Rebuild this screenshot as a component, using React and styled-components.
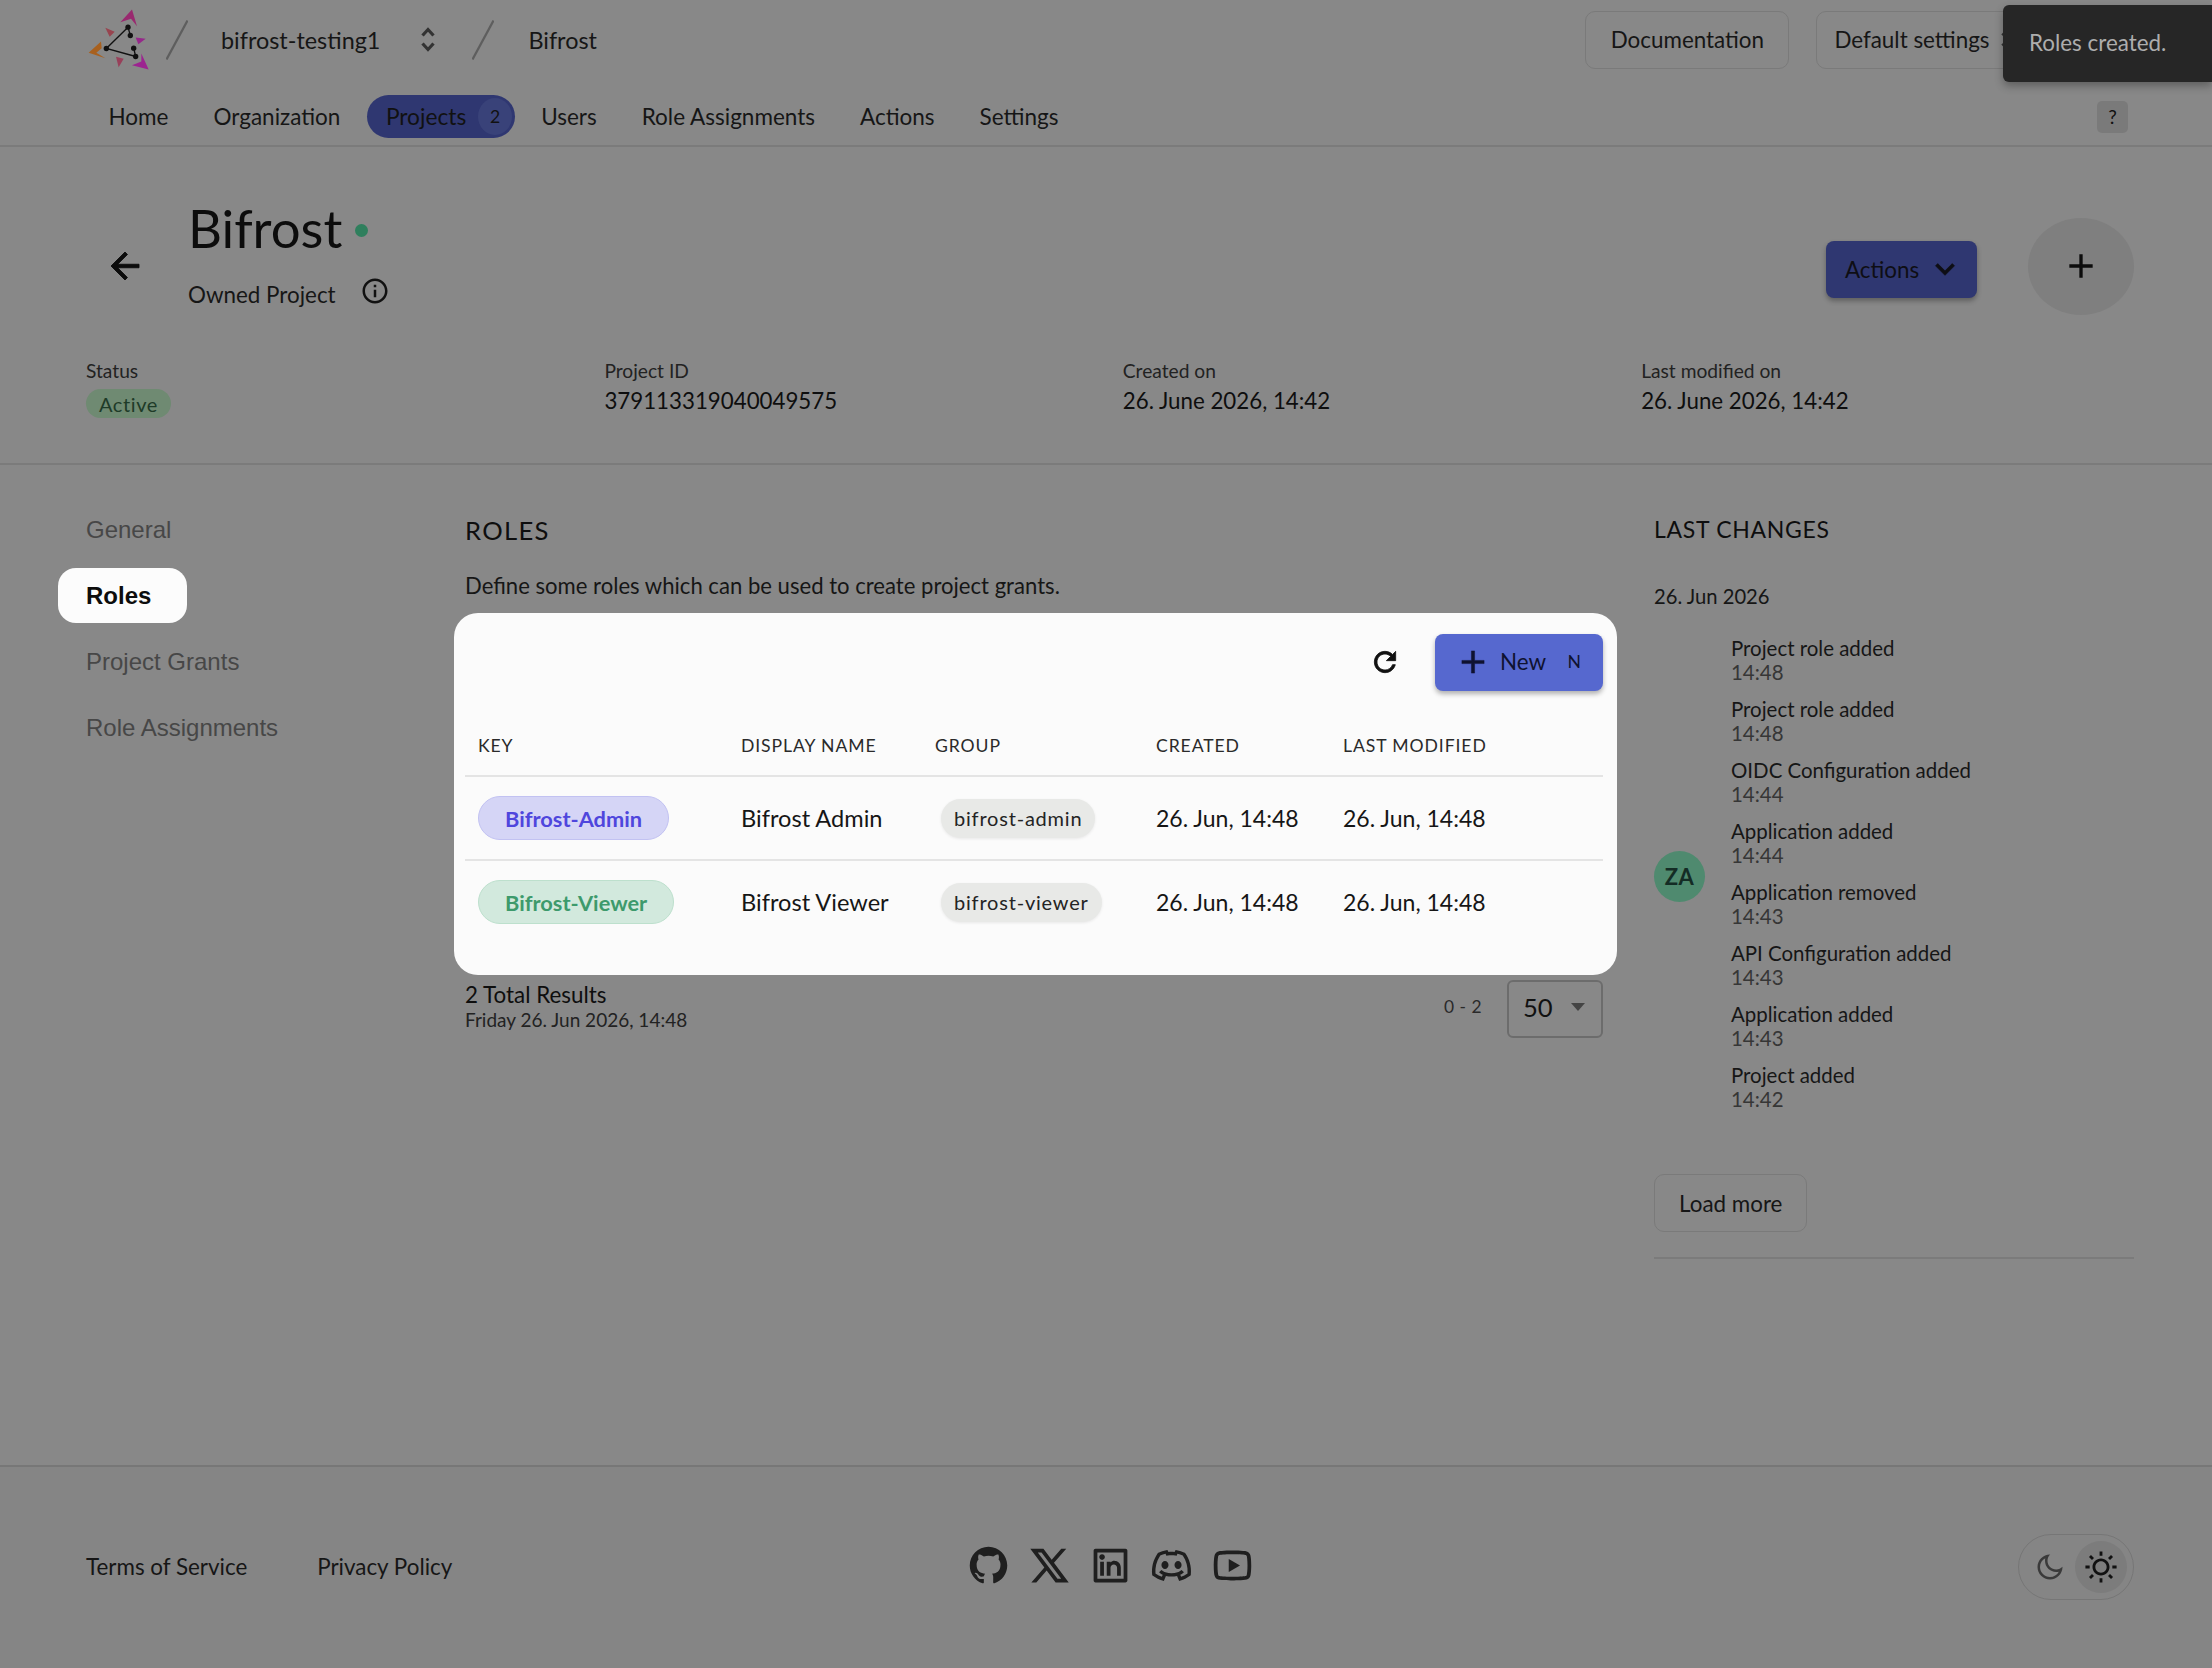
import React from "react";
import styled, { createGlobalStyle } from "styled-components";
import {
  RiGithubFill,
  RiTwitterXLine,
  RiLinkedinBoxLine,
  RiDiscordLine,
  RiYoutubeLine,
  RiMoonLine,
  RiSunLine,
} from "react-icons/ri";

const GlobalStyle = createGlobalStyle`
  * { box-sizing: border-box; }
  body {
    margin: 0;
    background: #888888;
    color: #111111;
    font-family: Lato, "Open Sans", sans-serif;
  }
`;

const Page = styled.div`
  position: relative;
  width: 2212px;
  height: 1668px;
  display: flex;
  flex-direction: column;
  overflow: hidden;
`;

const Header = styled.header`
  height: 147px;
  border-bottom: 2px solid #7b7b7b;
`;

const TopRow = styled.div`
  height: 79px;
  display: flex;
  align-items: center;
  padding: 0 177px 0 87px;
`;

const Crumb = styled.span`
  font-size: 23.4px;
  color: #161616;
  margin-left: ${({ $ml }) => $ml || 0}px;
`;

const Slash = styled.svg`
  width: 22px;
  height: 40px;
  margin-left: ${({ $ml }) => $ml}px;
  flex: none;
`;

const UpDown = styled.svg`
  width: 20px;
  height: 25px;
  margin-left: ${({ $ml }) => $ml || 0}px;
  flex: none;
`;

const TopActions = styled.div`
  margin-left: auto;
  display: flex;
  gap: 27px;
`;

const OutlineButton = styled.div`
  height: 58px;
  display: inline-flex;
  align-items: center;
  justify-content: center;
  border: 1.5px solid #7a7a7a;
  border-radius: 10px;
  font-size: 22.4px;
  color: #161616;
  padding: 0 ${({ $pr }) => $pr ?? 0}px 0 ${({ $pl }) => $pl ?? 0}px;
`;

const DocButton = styled(OutlineButton)`
  width: 204px;
`;

const NavRow = styled.nav`
  height: 43px;
  margin-top: 16px;
  display: flex;
  align-items: center;
  padding: 0 84px 0 86px;
`;

const NavItem = styled.a`
  font-size: 22.5px;
  color: #161616;
  padding: 0 22.5px;
`;

const ActiveItem = styled.a`
  height: 43px;
  display: flex;
  align-items: center;
  font-size: 22.7px;
  color: #111111;
  background: #2f3771;
  border-radius: 22px;
  margin: 0 3.5px 0 4px;
  padding: 0 3px 0 19px;
`;

const Count = styled.span`
  width: 34px;
  height: 37px;
  margin-left: 12px;
  display: flex;
  align-items: center;
  justify-content: center;
  border-radius: 50%;
  background: #394279;
  font-size: 17.6px;
`;

const Help = styled.span`
  margin-left: auto;
  width: 31px;
  height: 32px;
  display: flex;
  align-items: center;
  justify-content: center;
  border-radius: 5px;
  background: #7a7a7a;
  font-size: 19.2px;
`;

const ProjectHead = styled.section`
  height: 318px;
  border-bottom: 2px solid #7b7b7b;
  padding: 70px 78px 0 86px;
`;

const TitleRow = styled.div`
  height: 98px;
  display: flex;
  align-items: center;
`;

const BackArrow = styled.svg`
  width: 42px;
  height: 42px;
  margin-left: 18px;
  flex: none;
`;

const TitleBlock = styled.div`
  align-self: flex-start;
  margin: -20px 0 0 42px;
`;

const TitleLine = styled.div`
  display: flex;
  align-items: flex-start;
`;

const Title = styled.h1`
  margin: 0;
  font-size: 52.7px;
  font-weight: 400;
  line-height: 62px;
  color: #0c0c0c;
`;

const StatusDot = styled.span`
  width: 13px;
  height: 13px;
  margin: 27px 0 0 13px;
  border-radius: 50%;
  background: #2f7f5d;
`;

const SubLine = styled.div`
  display: flex;
  align-items: center;
  margin-top: 22px;
  font-size: 22.4px;
  color: #161616;
`;

const InfoIcon = styled.svg`
  width: 30px;
  height: 30px;
  margin: -7px 0 0 24px;
`;

const ActionsButton = styled.div`
  margin-left: auto;
  margin-top: 6px;
  width: 151px;
  height: 57px;
  display: flex;
  align-items: center;
  padding-left: 19px;
  border-radius: 8px;
  background: #2f3771;
  font-size: 22.4px;
  color: #0e0e14;
  box-shadow: 0 3px 5px rgba(0, 0, 0, 0.3);
`;

const Chevron = styled.svg`
  width: 38px;
  height: 38px;
  margin-left: 7px;
`;

const RoundAdd = styled.div`
  width: 106px;
  height: 97px;
  margin-left: 51px;
  display: flex;
  align-items: center;
  justify-content: center;
  border-radius: 50%;
  background: #7f7f7f;
`;

const AddIcon = styled.svg`
  width: 40px;
  height: 40px;
`;

const InfoGrid = styled.div`
  display: grid;
  grid-template-columns: repeat(4, 518.4px);
  margin-top: 42px;
`;

const InfoLabel = styled.div`
  font-size: 19.2px;
  line-height: 28px;
  color: #222222;
`;

const InfoValue = styled.div`
  font-size: 22.3px;
  line-height: 30px;
  margin-top: 1px;
  color: #0e0e0e;
`;

const StatusChip = styled.span`
  display: inline-flex;
  align-items: center;
  height: 29px;
  margin-top: 4px;
  padding: 0 13px;
  border-radius: 15px;
  background: #6f8a72;
  color: #1e3b28;
  font-size: 20px;
  letter-spacing: 0.6px;
`;

const Body = styled.main`
  flex: 1;
  display: grid;
  grid-template-columns: 379px 1138px 480px;
  align-items: start;
  padding-left: 86px;
`;

const SideMenu = styled.div`
  display: flex;
  flex-direction: column;
  align-items: flex-start;
  gap: 12px;
  padding-top: 38px;
`;

const SideItem = styled.a`
  height: 54px;
  display: flex;
  align-items: center;
  font-family: "Liberation Sans", Arial, sans-serif;
  font-size: 24px;
  color: #474747;
`;

const ActiveSideItem = styled(SideItem)`
  height: 55px;
  margin: -1px 0 0 -28px;
  padding: 0 36px 0 28px;
  color: #0d0d0d;
  font-weight: 700;
  background: #fcfcfc;
  border-radius: 18px;
`;

const Content = styled.section`
  padding-top: 49px;
`;

const Heading = styled.h2`
  margin: 0;
  font-size: 25.6px;
  font-weight: 400;
  line-height: 32px;
  letter-spacing: 1.3px;
  color: #0e0e0e;
`;

const SideHeading = styled(Heading)`
  font-size: 23px;
  letter-spacing: 0.7px;
`;

const Description = styled.p`
  margin: 24px 0 11px;
  font-size: 22.1px;
  line-height: 32px;
  color: #161616;
`;

const TableCard = styled.div`
  margin: 0 -14px 0 -11px;
  height: 362px;
  padding: 21px 14px 0 11px;
  background: #fbfbfb;
  border-radius: 24px;
`;

const Toolbar = styled.div`
  height: 57px;
  display: flex;
  align-items: center;
  justify-content: flex-end;
`;

const RefreshIcon = styled.svg`
  width: 32px;
  height: 32px;
  margin: -2px 34px 0 0;
`;

const NewButton = styled.div`
  width: 168px;
  height: 57px;
  display: flex;
  align-items: center;
  padding: 0 0 2px 19px;
  border-radius: 8px;
  background: #5668cf;
  font-size: 22.4px;
  color: #0f1230;
  box-shadow: 0 3px 5px rgba(0, 0, 0, 0.3);
`;

const PlusIcon = styled.svg`
  width: 38px;
  height: 38px;
  margin-right: 8px;
`;

const Key = styled.span`
  margin-left: auto;
  margin-right: 22px;
  font-size: 17.6px;
`;

const TableRow = styled.div`
  display: grid;
  grid-template-columns: 263px 194px 221px 187px 1fr;
  align-items: center;
  height: ${({ $h }) => $h}px;
  padding-left: 13px;
  border-bottom: ${({ $line }) => ($line ? "2px solid #e4e4e4" : "none")};
`;

const HeadRow = styled(TableRow)`
  margin-top: 24px;
`;

const HeadCell = styled.span`
  font-size: 17.6px;
  letter-spacing: 0.9px;
  color: #2a2a2a;
`;

const NameCell = styled.span`
  font-size: 23.6px;
  color: #161616;
`;

const DateCell = styled.span`
  font-size: 23px;
  color: #161616;
`;

const KeyChip = styled.span`
  justify-self: start;
  height: 44px;
  display: inline-flex;
  align-items: center;
  padding: 0 26px;
  border-radius: 22px;
  border: 1.5px solid ${({ $tone }) => ($tone === "green" ? "#bde0cd" : "#c2c2f2")};
  background: ${({ $tone }) => ($tone === "green" ? "#d2e9dd" : "#d5d5f6")};
  color: ${({ $tone }) => ($tone === "green" ? "#3d9a6c" : "#4f46dd")};
  font-size: 21.8px;
  font-weight: 700;
`;

const GroupChip = styled.span`
  justify-self: start;
  height: 39px;
  margin-left: 6px;
  display: inline-flex;
  align-items: center;
  padding: 0 13px;
  border-radius: 20px;
  background: #e8e9e7;
  font-size: 20px;
  letter-spacing: 0.8px;
  color: #242424;
  box-shadow: 0 1px 3px rgba(0, 0, 0, 0.08);
`;

const Pager = styled.div`
  display: flex;
  align-items: center;
  margin-top: 5px;
  height: 58px;
`;

const Totals = styled.div`
  margin-top: -5px;
`;

const TotalCount = styled.div`
  font-size: 22.4px;
  line-height: 26px;
  color: #0e0e0e;
`;

const TotalDate = styled.div`
  font-size: 19px;
  line-height: 24px;
  color: #222222;
`;

const PageRange = styled.span`
  margin: -6px 0 0 auto;
  font-size: 17.4px;
  letter-spacing: 0.5px;
  color: #2a2a2a;
`;

const PageSelect = styled.div`
  width: 96px;
  height: 58px;
  margin-left: 25px;
  display: flex;
  align-items: center;
  padding: 0 0 4px 14px;
  border: 2px solid #6c6c6c;
  border-radius: 6px;
  font-size: 25.6px;
  color: #111111;
`;

const Caret = styled.span`
  margin-left: 18px;
  border-left: 7px solid transparent;
  border-right: 7px solid transparent;
  border-top: 8px solid #444444;
`;

const Changes = styled.aside`
  margin-left: 51px;
  padding-top: 48px;
  width: 480px;
  border-bottom: 2px solid #7b7b7b;
  padding-bottom: 25px;
`;

const DateLine = styled.div`
  margin-top: 36px;
  font-size: 20.2px;
  line-height: 30px;
  color: #161616;
`;

const ChangeGroup = styled.div`
  display: flex;
  align-items: center;
  gap: 26px;
  margin-top: 25px;
`;

const Avatar = styled.span`
  width: 51px;
  height: 51px;
  margin-top: 6px;
  flex: none;
  display: flex;
  align-items: center;
  justify-content: center;
  border-radius: 50%;
  background: #4f8a6f;
  color: #142c25;
  font-size: 22px;
  font-weight: 700;
  letter-spacing: 0.5px;
`;

const ChangeList = styled.div`
  display: flex;
  flex-direction: column;
  gap: 13px;
`;

const ChangeTitle = styled.div`
  font-size: 20.45px;
  line-height: 24px;
  color: #161616;
`;

const ChangeTime = styled.div`
  font-size: 20.45px;
  line-height: 24px;
  color: #363636;
`;

const LoadMore = styled(OutlineButton)`
  margin-top: 63px;
`;

const Footer = styled.footer`
  height: 203px;
  border-top: 2px solid #777777;
  background: #858585;
  display: grid;
  grid-template-columns: 1fr auto 1fr;
  align-items: center;
  padding: 0 78px 2px 86px;
`;

const FooterLinks = styled.div`
  display: flex;
  gap: 70px;
`;

const FooterLink = styled.a`
  font-size: 22.4px;
  color: #161616;
`;

const Socials = styled.div`
  display: flex;
  gap: 16px;
  margin-top: -2px;
  color: #1f1f1f;
  font-size: 45px;
`;

const Toggle = styled.div`
  justify-self: end;
  width: 116px;
  height: 66px;
  display: flex;
  align-items: center;
  justify-content: space-between;
  padding: 0 6px 0 16px;
  border: 1.5px solid #767676;
  border-radius: 33px;
  color: #3a3a3a;
  font-size: 30px;
`;

const SunWrap = styled.span`
  width: 52px;
  height: 52px;
  display: flex;
  align-items: center;
  justify-content: center;
  border-radius: 50%;
  background: #7c7c7c;
  color: #111111;
  font-size: 34px;
`;

const Toast = styled.div`
  position: absolute;
  top: 5px;
  right: 0;
  width: 209px;
  height: 77px;
  display: flex;
  align-items: center;
  padding: 0 0 2px 26px;
  border-radius: 6px 0 0 6px;
  background: #262626;
  color: #adadad;
  font-size: 22.4px;
  box-shadow: 0 4px 8px rgba(0, 0, 0, 0.3);
`;

const Logo = () => (
  <svg width="64" height="67" viewBox="80 20 192 200" style={{ flex: "none" }}>
    <polygon points="180,68 215,30 230,80 212,58" fill="#99296f" />
    <polygon points="135,85 163,97 148,112" fill="#98444f" />
    <polygon points="226,114 256,118 234,134" fill="#96288a" />
    <polygon points="85,160 122,126 124,146 108,160 135,176" fill="#a8601e" />
    <polygon points="167,172 190,178 175,203" fill="#98405a" />
    <polygon points="215,197 243,186 243,162 265,210" fill="#9c2490" />
    <g stroke="#111" strokeWidth="4" fill="none">
      <path d="M203 83 138 147 226 171" />
      <path d="M203 83 210 108" />
      <path d="M226 171 220 146" />
    </g>
    <g fill="#111">
      <circle cx="203" cy="83" r="8" />
      <circle cx="210" cy="108" r="8" />
      <circle cx="138" cy="147" r="8" />
      <circle cx="220" cy="146" r="8" />
      <circle cx="226" cy="171" r="8" />
    </g>
  </svg>
);

const SlashMark = ({ ml }) => (
  <Slash $ml={ml} viewBox="0 0 22 40">
    <line x1="21.5" y1="0.5" x2="0.5" y2="39.5" stroke="#5e5e5e" strokeWidth="2.2" />
  </Slash>
);

const UpDownMark = ({ ml }) => (
  <UpDown $ml={ml} viewBox="0 0 20 25">
    <path
      d="M4.5 8.5 10 2.5l5.5 6M4.5 16.5 10 22.5l5.5-6"
      fill="none"
      stroke="#333333"
      strokeWidth="3.2"
    />
  </UpDown>
);

const navBefore = ["Home", "Organization"];
const navAfter = ["Users", "Role Assignments", "Actions", "Settings"];
const sideItems = ["General", "Roles", "Project Grants", "Role Assignments"];

const infoColumns = [
  { label: "Project ID", value: "379113319040049575" },
  { label: "Created on", value: "26. June 2026, 14:42" },
  { label: "Last modified on", value: "26. June 2026, 14:42" },
];

const roles = [
  { key: "Bifrost-Admin", name: "Bifrost Admin", group: "bifrost-admin", tone: "blue", h: 84 },
  { key: "Bifrost-Viewer", name: "Bifrost Viewer", group: "bifrost-viewer", tone: "green", h: 82 },
];

const columns = ["KEY", "DISPLAY NAME", "GROUP", "CREATED", "LAST MODIFIED"];

const changes = [
  ["Project role added", "14:48"],
  ["Project role added", "14:48"],
  ["OIDC Configuration added", "14:44"],
  ["Application added", "14:44"],
  ["Application removed", "14:43"],
  ["API Configuration added", "14:43"],
  ["Application added", "14:43"],
  ["Project added", "14:42"],
];

export default function App() {
  return (
    <Page>
      <GlobalStyle />
      <Header>
        <TopRow>
          <Logo />
          <SlashMark ml={15} />
          <Crumb $ml={33}>bifrost-testing1</Crumb>
          <UpDownMark ml={38} />
          <SlashMark ml={34} />
          <Crumb $ml={34}>Bifrost</Crumb>
          <TopActions>
            <DocButton>Documentation</DocButton>
            <OutlineButton $pl={17} $pr={16.5}>
              Default settings
              <UpDownMark ml={8} />
            </OutlineButton>
          </TopActions>
        </TopRow>
        <NavRow>
          {navBefore.map((item) => (
            <NavItem key={item}>{item}</NavItem>
          ))}
          <ActiveItem>
            Projects
            <Count>2</Count>
          </ActiveItem>
          {navAfter.map((item) => (
            <NavItem key={item}>{item}</NavItem>
          ))}
          <Help>?</Help>
        </NavRow>
      </Header>

      <ProjectHead>
        <TitleRow>
          <BackArrow viewBox="0 0 24 24">
            <path
              d="M20 11H7.83l5.59-5.59L12 4l-8 8 8 8 1.41-1.41L7.83 13H20v-2z"
              fill="#0c0c0c"
              stroke="#0c0c0c"
              strokeWidth="0.5"
            />
          </BackArrow>
          <TitleBlock>
            <TitleLine>
              <Title>Bifrost</Title>
              <StatusDot />
            </TitleLine>
            <SubLine>
              Owned Project
              <InfoIcon viewBox="0 0 24 24">
                <path
                  d="M11 7h2v2h-2zm0 4h2v6h-2zm1-9C6.48 2 2 6.48 2 12s4.48 10 10 10 10-4.48 10-10S17.52 2 12 2zm0 18c-4.41 0-8-3.59-8-8s3.59-8 8-8 8 3.59 8 8-3.59 8-8 8z"
                  fill="#111"
                />
              </InfoIcon>
            </SubLine>
          </TitleBlock>
          <ActionsButton>
            Actions
            <Chevron viewBox="0 0 24 24">
              <path
                d="M16.59 8.59 12 13.17 7.41 8.59 6 10l6 6 6-6z"
                fill="#0e0e14"
                stroke="#0e0e14"
                strokeWidth="0.4"
              />
            </Chevron>
          </ActionsButton>
          <RoundAdd>
            <AddIcon viewBox="0 0 24 24">
              <path d="M19 13h-6v6h-2v-6H5v-2h6V5h2v6h6v2z" fill="#0c0c0c" />
            </AddIcon>
          </RoundAdd>
        </TitleRow>
        <InfoGrid>
          <div>
            <InfoLabel>Status</InfoLabel>
            <StatusChip>Active</StatusChip>
          </div>
          {infoColumns.map((col) => (
            <div key={col.label}>
              <InfoLabel>{col.label}</InfoLabel>
              <InfoValue>{col.value}</InfoValue>
            </div>
          ))}
        </InfoGrid>
      </ProjectHead>

      <Body>
        <SideMenu>
          {sideItems.map((item) =>
            item === "Roles" ? (
              <ActiveSideItem key={item}>{item}</ActiveSideItem>
            ) : (
              <SideItem key={item}>{item}</SideItem>
            )
          )}
        </SideMenu>

        <Content>
          <Heading>ROLES</Heading>
          <Description>Define some roles which can be used to create project grants.</Description>
          <TableCard>
            <Toolbar>
              <RefreshIcon viewBox="0 0 24 24">
                <path
                  d="M17.65 6.35C16.2 4.9 14.21 4 12 4c-4.42 0-7.99 3.58-7.99 8s3.57 8 7.99 8c3.73 0 6.84-2.55 7.73-6h-2.08c-.82 2.33-3.04 4-5.65 4-3.31 0-6-2.69-6-6s2.69-6 6-6c1.66 0 3.14.69 4.22 1.78L13 11h7V4l-2.35 2.35z"
                  fill="#111"
                  stroke="#111"
                  strokeWidth="0.6"
                />
              </RefreshIcon>
              <NewButton>
                <PlusIcon viewBox="0 0 24 24">
                  <path
                    d="M19 13h-6v6h-2v-6H5v-2h6V5h2v6h6v2z"
                    fill="#0f1230"
                    stroke="#0f1230"
                    strokeWidth="0.3"
                  />
                </PlusIcon>
                New
                <Key>N</Key>
              </NewButton>
            </Toolbar>
            <HeadRow $h={62} $line>
              {columns.map((col) => (
                <HeadCell key={col}>{col}</HeadCell>
              ))}
            </HeadRow>
            {roles.map((role, i) => (
              <TableRow key={role.key} $h={role.h} $line={i === 0}>
                <KeyChip $tone={role.tone}>{role.key}</KeyChip>
                <NameCell>{role.name}</NameCell>
                <GroupChip>{role.group}</GroupChip>
                <DateCell>26. Jun, 14:48</DateCell>
                <DateCell>26. Jun, 14:48</DateCell>
              </TableRow>
            ))}
          </TableCard>
          <Pager>
            <Totals>
              <TotalCount>2 Total Results</TotalCount>
              <TotalDate>Friday 26. Jun 2026, 14:48</TotalDate>
            </Totals>
            <PageRange>0 - 2</PageRange>
            <PageSelect>
              50
              <Caret />
            </PageSelect>
          </Pager>
        </Content>

        <Changes>
          <SideHeading>LAST CHANGES</SideHeading>
          <DateLine>26. Jun 2026</DateLine>
          <ChangeGroup>
            <Avatar>ZA</Avatar>
            <ChangeList>
              {changes.map(([title, time], i) => (
                <div key={i}>
                  <ChangeTitle>{title}</ChangeTitle>
                  <ChangeTime>{time}</ChangeTime>
                </div>
              ))}
            </ChangeList>
          </ChangeGroup>
          <LoadMore $pl={24} $pr={24}>Load more</LoadMore>
        </Changes>
      </Body>

      <Footer>
        <FooterLinks>
          <FooterLink>Terms of Service</FooterLink>
          <FooterLink>Privacy Policy</FooterLink>
        </FooterLinks>
        <Socials>
          <RiGithubFill />
          <RiTwitterXLine />
          <RiLinkedinBoxLine />
          <RiDiscordLine />
          <RiYoutubeLine />
        </Socials>
        <Toggle>
          <RiMoonLine />
          <SunWrap>
            <RiSunLine />
          </SunWrap>
        </Toggle>
      </Footer>

      <Toast>Roles created.</Toast>
    </Page>
  );
}
